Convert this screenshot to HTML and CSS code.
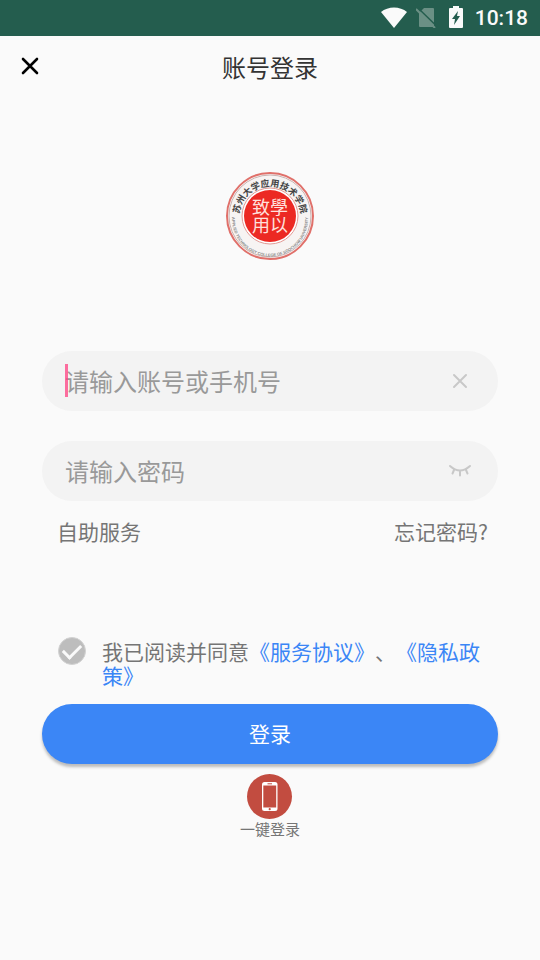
FILE: index.html
```html
<!DOCTYPE html>
<html lang="zh-CN">
<head>
<meta charset="utf-8">
<meta name="viewport" content="width=device-width, initial-scale=1">
<title>账号登录</title>
<link rel="stylesheet" href="styles.css">
</head>
<body>
<div class="status-bar">
  <svg class="status-icon wifi" width="28" height="22" viewBox="0 0 28 22" aria-hidden="true"><path d="M14 22 1 6C8 0 20 0 27 6Z" fill="#fafafa"/></svg>
  <svg class="status-icon sim" width="20" height="22" viewBox="0 0 20 22" aria-hidden="true"><path d="M8 2h9q1 0 1 1v17q0 1-1 1H4q-1 0-1-1V7Z" fill="#6b9085"/><path d="M2 2 20 19.500" stroke="#245d4e" stroke-width="1.500"/><path d="M0 3 19 22" stroke="#6b9085" stroke-width="2"/></svg>
  <svg class="status-icon battery" width="14" height="22" viewBox="0 0 14 22" aria-hidden="true"><path d="M4 0h6v2h3q1 0 1 1v18q0 1-1 1H1q-1 0-1-1V3q0-1 1-1h3Z" fill="#fafafa"/><path d="M9 5 8 10h3L5 19l1-6H3Z" fill="#245d4e"/></svg>
  <time class="clock">10:18</time>
</div>

<header class="app-bar">
  <button class="icon-button close" type="button" aria-label="关闭"><svg width="20" height="20" viewBox="0 0 20 20"><path d="m3 3 14 14M17 3 3 17" fill="none" stroke="#000" stroke-width="2.600" stroke-linecap="round"/></svg></button>
  <h1 class="title">账号登录</h1>
</header>

<main class="content">
  <svg class="seal" width="90" height="90" viewBox="0 0 90 90" role="img" aria-label="校徽">
    <defs>
      <path id="arc-top" d="M14.500 52A31 31 0 1 1 75.500 52"/>
      <path id="arc-bottom" d="M7.400 42A38 38 0 1 0 82.600 42"/>
    </defs>
    <circle cx="45" cy="45" r="43" fill="#f7f4f3" stroke="#e0706a" stroke-width="2"/>
    <circle cx="45" cy="45" r="41" fill="none" stroke="#c9b4b2" stroke-width="1"/>
    <circle cx="45" cy="45" r="28" fill="#fff" stroke="#e39a95" stroke-width="1"/>
    <circle cx="45" cy="45" r="26" fill="#ec2923"/>
    <text class="seal-name"><textPath href="#arc-top" startOffset="50%" text-anchor="middle">苏州大学应用技术学院</textPath></text>
    <text class="seal-latin"><textPath href="#arc-bottom" startOffset="50%" text-anchor="middle">APPLIED TECHNOLOGY COLLEGE OF SOOCHOW UNIVERSITY</textPath></text>
    <g class="seal-motto"><text x="54" y="45">學以</text><text x="36" y="45">致用</text></g>
  </svg>

  <form class="login">
    <div class="field">
      <input class="field-input" type="text" aria-label="账号或手机号" placeholder="请输入账号或手机号">
      <span class="caret"></span>
      <button class="icon-button" type="button" aria-label="清除"><svg width="24" height="24" viewBox="0 0 24 24"><path d="m6 6 12 12M18 6 6 18" fill="none" stroke="#c8c8c8" stroke-width="2" stroke-linecap="round"/></svg></button>
    </div>
    <div class="field">
      <input class="field-input" type="password" aria-label="密码" placeholder="请输入密码">
      <button class="icon-button" type="button" aria-label="显示密码"><svg width="24" height="24" viewBox="0 0 24 24"><path d="M2 7Q12 16 22 7M6 11 4.500 14.500M12 12V16.500M18 11 19.500 14.500" fill="none" stroke="#c8c8c8" stroke-width="2" stroke-linecap="round"/></svg></button>
    </div>
    <nav class="links"><a href="#service">自助服务</a><a href="#forgot">忘记密码?</a></nav>
    <div class="agreement">
      <input class="agree-box" id="agree" type="checkbox" checked>
      <p class="agree-text"><label for="agree">我已阅读并同意</label><a href="#terms">《服务协议》</a>、<a href="#privacy">《隐私政策》</a></p>
    </div>
    <button class="submit" type="submit">登录</button>
  </form>

  <button class="quick" type="button">
    <svg width="46" height="46" viewBox="0 0 46 46" aria-hidden="true"><circle cx="22.500" cy="22.500" r="22.500" fill="#c24c40"/><rect x="15" y="8" width="15.500" height="29" rx="2.500" fill="#fff"/><path d="M16.300 11.500h12.900v22H16.300Z" fill="#c24c40"/><path d="M20.500 9.800h4.500" stroke="#c24c40" stroke-width="1"/><circle cx="22.700" cy="35.200" r="1.100" fill="#c24c40"/></svg>
    <span>一键登录</span>
  </button>
</main>
</body>
</html>
```
FILE: styles.css
```css
* {
  box-sizing: border-box;
}

body {
  margin: 0;
  min-height: 100vh;
  background: #fafafa;
  color: #757575;
  font-family: "Noto Sans CJK SC", Roboto, sans-serif;
  text-spacing-trim: space-all;
}

button,
input {
  margin: 0;
  padding: 0;
  border: 0;
  background: none;
  font: inherit;
  color: inherit;
}

svg {
  display: block;
}

a {
  color: inherit;
  text-decoration: none;
}

.status-bar {
  display: flex;
  align-items: center;
  justify-content: flex-end;
  height: 36px;
  padding: 0 12px;
  background: #245d4e;
  color: #fafafa;
}

.status-icon {
  margin-bottom: 2px;
}

.sim {
  margin-left: 8px;
}

.battery {
  margin-left: 13px;
}

.clock {
  margin-left: 12px;
  font-family: Roboto, sans-serif;
  font-size: 21px;
  font-weight: 500;
  line-height: 38px;
}

.app-bar {
  display: grid;
  grid-template-columns: 60px 1fr 60px;
  height: 60px;
}

.icon-button {
  display: flex;
  align-items: center;
  justify-content: center;
}

.close {
  height: 60px;
}

.title {
  margin: 0;
  color: #333;
  font-size: 24px;
  font-weight: 400;
  line-height: 62px;
  text-align: center;
}

.content {
  display: flex;
  flex-direction: column;
  align-items: center;
  padding: 75px 42px 0;
}

.seal-name {
  fill: #444;
  font: 700 9px "Noto Sans CJK SC", sans-serif;
}

.seal-latin {
  fill: #888;
  font: 700 4px "Liberation Sans", sans-serif;
}

.seal-motto {
  fill: #ffe0dc;
  font: 400 18px "Noto Sans CJK TC", sans-serif;
  text-anchor: middle;
  writing-mode: vertical-rl;
}

.login {
  width: 100%;
  margin-top: 90px;
}

.field {
  position: relative;
  display: flex;
  align-items: center;
  height: 60px;
  margin-bottom: 30px;
  padding: 0 26px 0 23px;
  border-radius: 30px;
  background: #f3f3f3;
}

.field-input {
  flex: 1;
  min-width: 0;
  height: 60px;
  padding-bottom: 2px;
  outline: 0;
  font-size: 24px;
}

.field-input::placeholder {
  color: #999;
  opacity: 1;
}

.caret {
  position: absolute;
  top: 13px;
  left: 23px;
  width: 3px;
  height: 33px;
  background: #ff4081;
  opacity: 0.75;
}

.links {
  display: flex;
  justify-content: space-between;
  margin-top: -15px;
  padding: 0 10px 0 15px;
  font-size: 21px;
  line-height: 30px;
}

.agreement {
  display: flex;
  align-items: flex-start;
  margin-top: 91px;
  padding-left: 16px;
}

.agree-box {
  flex: none;
  appearance: none;
  display: grid;
  place-items: center;
  width: 28px;
  height: 28px;
  border: 1px solid #d2d2d2;
  border-radius: 50%;
  background: #bdbdbd;
}

.agree-box:checked::before {
  content: "";
  width: 15px;
  height: 8px;
  border: solid #fafafa;
  border-width: 0 0 3px 3px;
  transform: translateY(-2px) rotate(-45deg);
}

.agree-text {
  flex: 1;
  margin: 2px 0 0 16px;
  font-size: 21px;
  line-height: 24px;
}

.agree-text a {
  color: #3b86f6;
}

.submit {
  display: block;
  width: 100%;
  height: 60px;
  margin-top: 17px;
  padding-bottom: 2px;
  border-radius: 30px;
  background: #3b86f6;
  box-shadow: 0 3px 3px rgba(0, 0, 0, 0.25);
  color: #fff;
  font-size: 21px;
}

.quick {
  display: flex;
  flex-direction: column;
  align-items: center;
  margin-top: 10px;
  font-size: 15px;
  line-height: 18px;
}
```
